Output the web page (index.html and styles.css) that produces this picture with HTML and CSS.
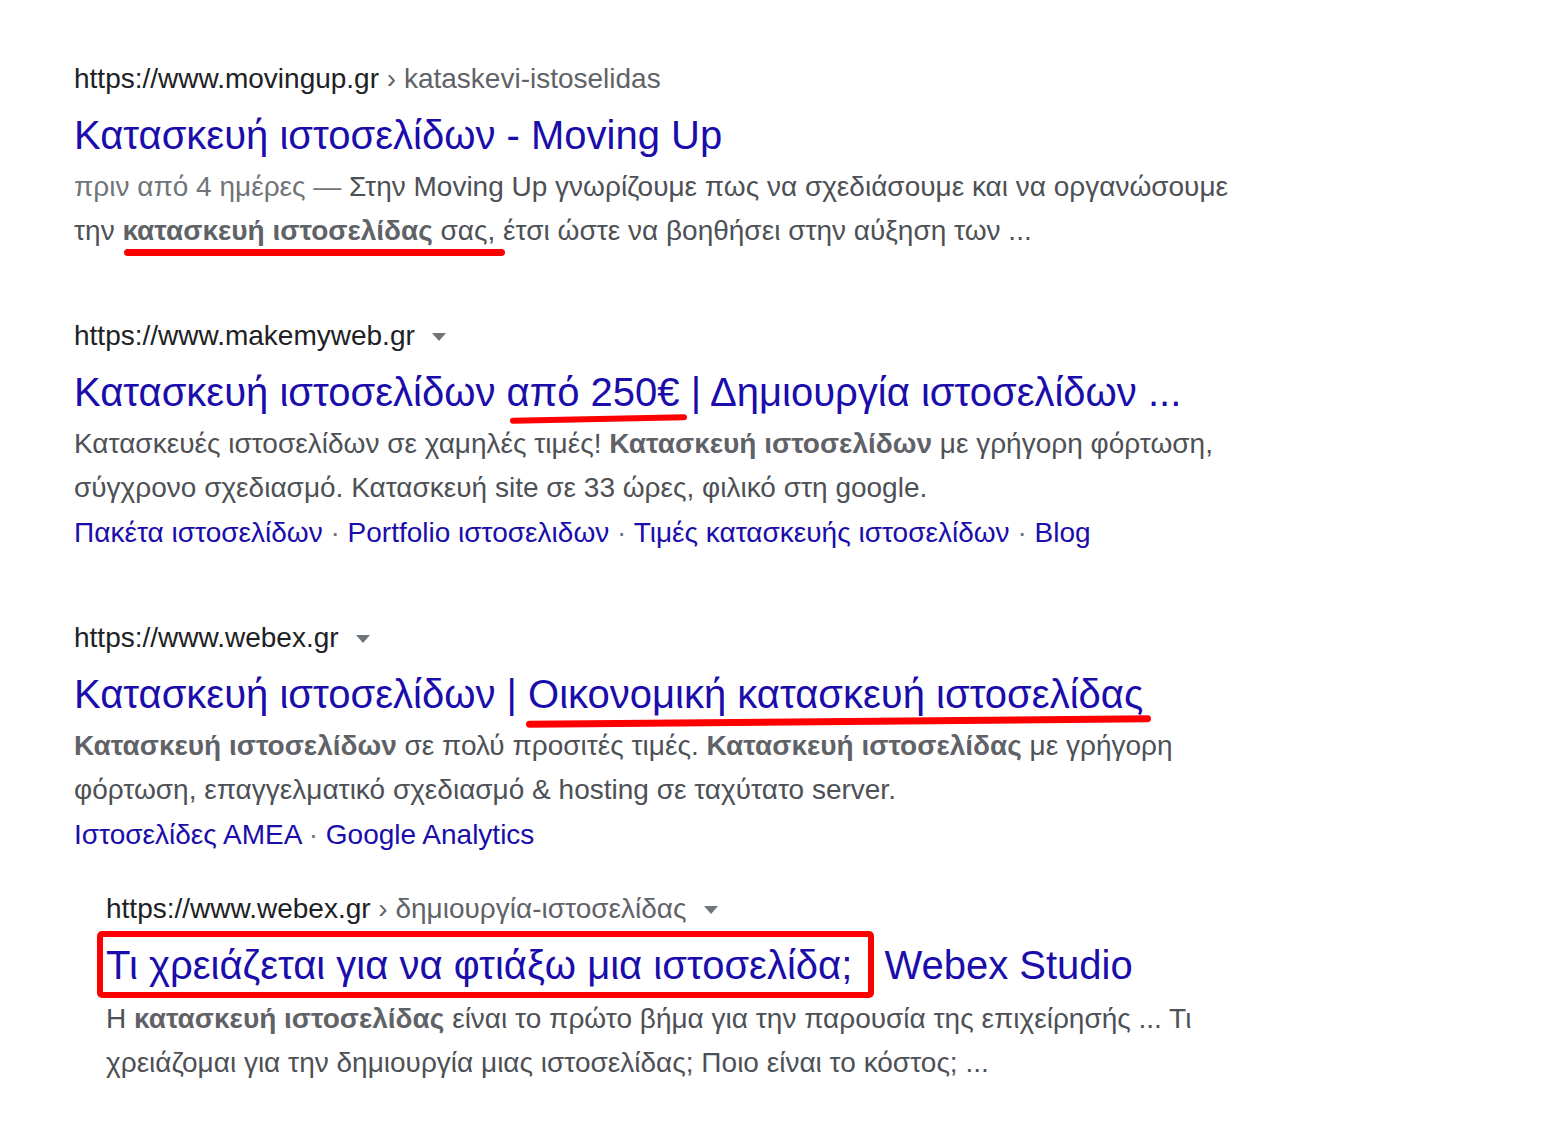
FILE: index.html
```html
<!DOCTYPE html>
<html lang="el">
<head>
<meta charset="utf-8">
<title>Αποτελέσματα αναζήτησης</title>
<link rel="stylesheet" href="styles.css">
</head>
<body>
<main class="results">

  <section class="result">
    <div class="cite">https://www.movingup.gr<span class="path"> › kataskevi-istoselidas</span></div>
    <h3 class="title">Κατασκευή ιστοσελίδων - Moving Up</h3>
    <div class="snippet"><span class="date">πριν από 4 ημέρες — </span>Στην Moving Up γνωρίζουμε πως να σχεδιάσουμε και να οργανώσουμε<br>την <span class="mark m1"><b>κατασκευή ιστοσελίδας</b> σας,</span> έτσι ώστε να βοηθήσει στην αύξηση των ...</div>
  </section>

  <section class="result">
    <div class="cite">https://www.makemyweb.gr<span class="caret"></span></div>
    <h3 class="title">Κατασκευή ιστοσελίδων <span class="mark m2">από 250€</span> | Δημιουργία ιστοσελίδων ...</h3>
    <div class="snippet">Κατασκευές ιστοσελίδων σε χαμηλές τιμές! <b>Κατασκευή ιστοσελίδων</b> με γρήγορη φόρτωση,<br>σύγχρονο σχεδιασμό. Κατασκευή site σε 33 ώρες, φιλικό στη google.</div>
    <div class="sitelinks"><a>Πακέτα ιστοσελίδων</a><span class="dot"> · </span><a>Portfolio ιστοσελιδων</a><span class="dot"> · </span><a>Τιμές κατασκευής ιστοσελίδων</a><span class="dot"> · </span><a>Blog</a></div>
  </section>

  <section class="result">
    <div class="cite">https://www.webex.gr<span class="caret"></span></div>
    <h3 class="title">Κατασκευή ιστοσελίδων | <span class="mark m3">Οικονομική κατασκευή ιστοσελίδας</span></h3>
    <div class="snippet"><b>Κατασκευή ιστοσελίδων</b> σε πολύ προσιτές τιμές. <b>Κατασκευή ιστοσελίδας</b> με γρήγορη<br>φόρτωση, επαγγελματικό σχεδιασμό &amp; hosting σε ταχύτατο server.</div>
    <div class="sitelinks"><a>Ιστοσελίδες ΑΜΕΑ</a><span class="dot"> · </span><a>Google Analytics</a></div>
  </section>

  <section class="result nested">
    <div class="cite">https://www.webex.gr<span class="path"> › δημιουργία-ιστοσελίδας</span><span class="caret"></span></div>
    <h3 class="title"><span class="boxed">Τι χρειάζεται για να φτιάξω μια ιστοσελίδα;</span> Webex Studio</h3>
    <div class="snippet">Η <b>κατασκευή ιστοσελίδας</b> είναι το πρώτο βήμα για την παρουσία της επιχείρησής ... Τι<br>χρειάζομαι για την δημιουργία μιας ιστοσελίδας; Ποιο είναι το κόστος; ...</div>
  </section>

</main>
</body>
</html>
```

FILE: styles.css
```css
html, body {
  margin: 0;
  padding: 0;
  background: #ffffff;
}

body {
  font-family: "Liberation Sans", Arial, sans-serif;
  width: 1560px;
  height: 1144px;
  overflow: hidden;
}

.results {
  padding: 59px 0 0 74px;
  display: flex;
  flex-direction: column;
}

.result {
  display: flex;
  flex-direction: column;
  margin-bottom: 63px;
}

.result + .nested {
  margin-top: -31px;
}

.nested {
  padding-left: 32px;
}

.nested .snippet {
  margin-top: 6px;
}

.cite {
  font-size: 28px;
  line-height: 40px;
  color: #202124;
  display: flex;
  align-items: center;
  white-space: pre;
}

.path {
  color: #5f6368;
}

.caret {
  width: 0;
  height: 0;
  margin-left: 17px;
  margin-top: 2px;
  border-left: 7px solid transparent;
  border-right: 7px solid transparent;
  border-top: 8px solid #70757a;
}

.title {
  margin: 10px 0 0 0;
  font-size: 40px;
  line-height: 52px;
  font-weight: normal;
  color: #1a0dab;
  white-space: nowrap;
}

.snippet {
  margin-top: 4px;
  font-size: 28px;
  line-height: 44px;
  color: #4d5156;
  white-space: nowrap;
}

.snippet b {
  font-weight: bold;
  color: #5f6368;
}

.date {
  color: #70757a;
}

.sitelinks {
  margin-top: 1px;
  font-size: 28px;
  line-height: 44px;
  color: #1a0dab;
  white-space: nowrap;
}

.sitelinks .dot {
  color: #70757a;
}

/* hand-drawn red annotations */
.mark {
  position: relative;
}

.mark::after {
  content: "";
  position: absolute;
  height: 7px;
  border-radius: 4px;
  background: #ff0000;
}

.m1::after {
  left: 2px;
  right: -10px;
  bottom: -10px;
}

.m2::after {
  left: 3px;
  right: -7px;
  bottom: -8px;
  height: 6px;
  transform: rotate(-1.1deg);
}

.m3::after {
  left: -2px;
  right: -8px;
  bottom: -9px;
  transform: rotate(-0.5deg);
}

.boxed {
  border: 6px solid #ff0000;
  border-radius: 5px;
  padding: 6px 16px 5px 3px;
  margin-left: -9px;
  margin-right: -1px;
}
```
